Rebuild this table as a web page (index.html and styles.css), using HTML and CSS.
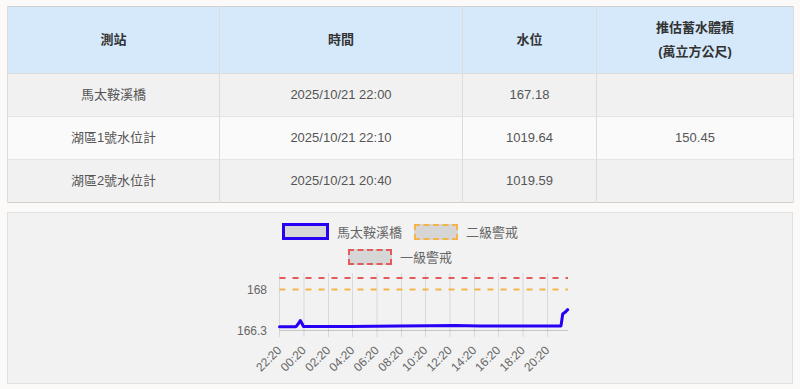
FILE: index.html
```html
<!DOCTYPE html>
<html lang="zh-Hant">
<head>
<meta charset="utf-8">
<title>水位</title>
<link rel="stylesheet" href="styles.css">
</head>
<body>
<div class="page">
  <table class="data">
    <colgroup>
      <col class="c-station"><col class="c-time"><col class="c-level"><col class="c-vol">
    </colgroup>
    <thead>
      <tr><th>測站</th><th>時間</th><th>水位</th><th>推估蓄水體積<br>(萬立方公尺)</th></tr>
    </thead>
    <tbody>
      <tr><td>馬太鞍溪橋</td><td>2025/10/21 22:00</td><td>167.18</td><td></td></tr>
      <tr><td>湖區1號水位計</td><td>2025/10/21 22:10</td><td>1019.64</td><td>150.45</td></tr>
      <tr><td>湖區2號水位計</td><td>2025/10/21 20:40</td><td>1019.59</td><td></td></tr>
    </tbody>
  </table>

  <section class="chart-panel">
    <div class="legend">
      <div class="item"><span class="swatch swatch-blue"></span>馬太鞍溪橋</div>
      <div class="item"><span class="swatch swatch-orange"></span>二級警戒</div>
      <div class="item"><span class="swatch swatch-red"></span>一級警戒</div>
    </div>
    <svg class="plot" width="340" height="116" viewBox="0 0 340 116">
      <g class="grid">
        <line x1="49.5" y1="8" x2="49.5" y2="72"/>
        <line x1="74" y1="8" x2="74" y2="72"/>
        <line x1="98.5" y1="8" x2="98.5" y2="72"/>
        <line x1="122.5" y1="8" x2="122.5" y2="72"/>
        <line x1="147" y1="8" x2="147" y2="72"/>
        <line x1="171.5" y1="8" x2="171.5" y2="72"/>
        <line x1="195.5" y1="8" x2="195.5" y2="72"/>
        <line x1="220" y1="8" x2="220" y2="72"/>
        <line x1="244.5" y1="8" x2="244.5" y2="72"/>
        <line x1="268.5" y1="8" x2="268.5" y2="72"/>
        <line x1="293" y1="8" x2="293" y2="72"/>
        <line x1="317.5" y1="8" x2="317.5" y2="72"/>
      </g>
      <line class="axis" x1="49.5" y1="65.5" x2="338" y2="65.5"/>
      <line class="warn-red" x1="49.5" y1="13" x2="338" y2="13"/>
      <line class="warn-orange" x1="49.5" y1="24.5" x2="338" y2="24.5"/>
      <polyline class="series" points="49.5,61.7 66,61.7 68.5,58.5 70.3,55.5 72,58.5 73.5,61.5 120,61.4 170,61.1 200,60.8 225,60.6 250,61 290,61.1 331,60.9 332.7,49 335,47.3 337.7,44.7"/>
      <g class="ylab">
        <text x="37" y="29">168</text>
        <text x="37" y="70">166.3</text>
      </g>
      <g class="xlab">
        <text x="52.2" y="86" transform="rotate(-45 52.2 86)">22:20</text>
        <text x="76.7" y="86" transform="rotate(-45 76.7 86)">00:20</text>
        <text x="101.2" y="86" transform="rotate(-45 101.2 86)">02:20</text>
        <text x="125.2" y="86" transform="rotate(-45 125.2 86)">04:20</text>
        <text x="149.7" y="86" transform="rotate(-45 149.7 86)">06:20</text>
        <text x="174.2" y="86" transform="rotate(-45 174.2 86)">08:20</text>
        <text x="198.2" y="86" transform="rotate(-45 198.2 86)">10:20</text>
        <text x="222.7" y="86" transform="rotate(-45 222.7 86)">12:20</text>
        <text x="247.2" y="86" transform="rotate(-45 247.2 86)">14:20</text>
        <text x="271.2" y="86" transform="rotate(-45 271.2 86)">16:20</text>
        <text x="295.7" y="86" transform="rotate(-45 295.7 86)">18:20</text>
        <text x="320.2" y="86" transform="rotate(-45 320.2 86)">20:20</text>
      </g>
    </svg>
  </section>
</div>
</body>
</html>
```

FILE: styles.css
```css
html, body {
  margin: 0;
  padding: 0;
  background: #fbfaf8;
  font-family: "Liberation Sans", "Noto Sans CJK TC", sans-serif;
}

.page {
  padding: 6px 7px 0;
}

.data {
  width: 786px;
  border-collapse: collapse;
  table-layout: fixed;
  font-size: 13px;
  border: 1px solid #cfcfcf;
}

.c-station { width: 212px; }
.c-time { width: 243px; }
.c-level { width: 134px; }
.c-vol { width: 197px; }

.data th,
.data td {
  padding: 9px 8px;
  line-height: 24px;
  text-align: center;
  border-left: 1px solid #dcdcdc;
  border-right: 1px solid #dcdcdc;
}

.data th {
  background: #d5e9fb;
  color: #333;
  font-weight: 700;
  border-bottom: 1px solid #dcdcdc;
}

.data td {
  color: #555;
  border-top: 1px solid #e4e4e4;
}

.data tbody tr:nth-child(odd) td { background: #f1f1f1; }
.data tbody tr:nth-child(even) td { background: #fafafa; }

.chart-panel {
  margin-top: 9px;
  width: 784px;
  background: #f2f2f2;
  border: 1px solid #e0e0e0;
  padding: 10px 0 2px;
}

.legend {
  width: 340px;
  margin: 0 auto;
  display: flex;
  flex-wrap: wrap;
  justify-content: center;
  column-gap: 12px;
  row-gap: 8px;
}

.legend .item {
  display: flex;
  align-items: center;
  gap: 8px;
  height: 17px;
  font-size: 13px;
  color: #666;
}

.swatch {
  display: block;
  background: #d6d6d6;
}

.swatch-blue {
  width: 41px;
  height: 11px;
  border: 3px solid #2600f5;
}

.swatch-orange {
  width: 40px;
  height: 12px;
  border: 2px dashed #f3b54a;
}

.swatch-red {
  width: 40px;
  height: 12px;
  border: 2px dashed #e25a5a;
}

.plot {
  display: block;
  margin: 0 auto;
}

.grid line {
  stroke: rgba(0, 0, 0, 0.1);
  stroke-width: 1;
}

.axis {
  stroke: rgba(0, 0, 0, 0.18);
  stroke-width: 1;
}

.warn-red {
  stroke: #e25a5a;
  stroke-width: 2;
  stroke-dasharray: 6 7;
}

.warn-orange {
  stroke: #f3b54a;
  stroke-width: 2;
  stroke-dasharray: 6 7;
}

.series {
  fill: none;
  stroke: #2600f5;
  stroke-width: 3;
  stroke-linejoin: round;
  stroke-linecap: round;
}

.ylab text,
.xlab text {
  font-family: "Liberation Sans", sans-serif;
  font-size: 12px;
  fill: #666;
}

.ylab text,
.xlab text {
  text-anchor: end;
}
```
